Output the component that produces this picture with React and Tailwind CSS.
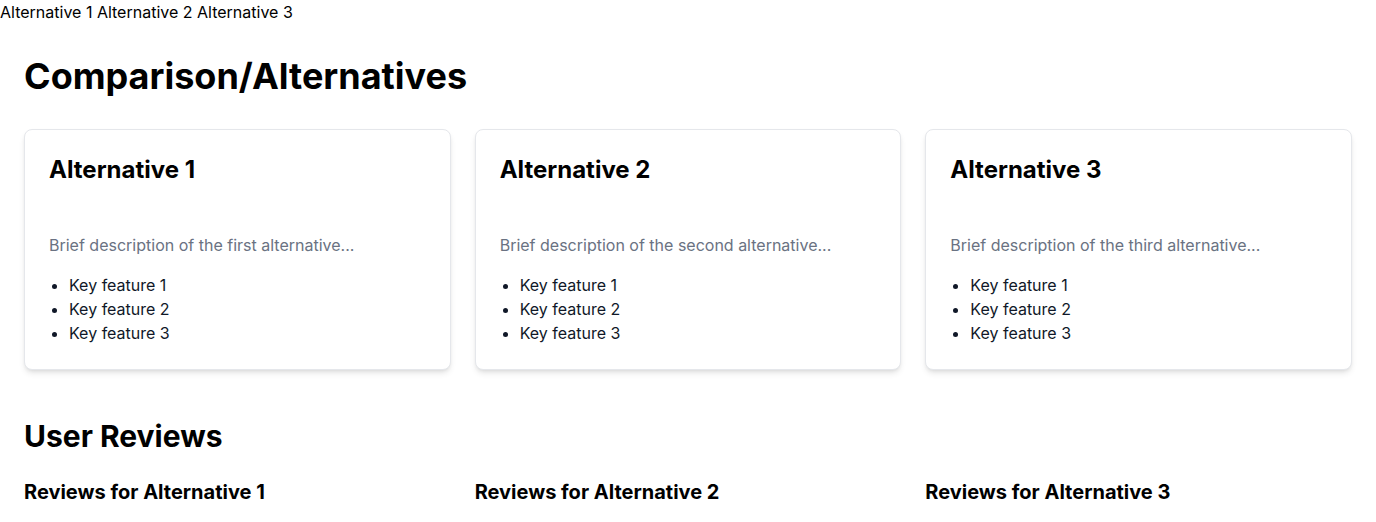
import React from 'react';

const alternatives = [
  { name: 'Alternative 1', desc: 'Brief description of the first alternative...' },
  { name: 'Alternative 2', desc: 'Brief description of the second alternative...' },
  { name: 'Alternative 3', desc: 'Brief description of the third alternative...' },
];

const App = () => {
  return (
    <div className="min-h-screen bg-white text-black font-['Inter',sans-serif]">
      {/* Top nav */}
      <nav className="text-base leading-6">
        {alternatives.map((a, i) => (
          <React.Fragment key={a.name}>
            <a href="#" className="text-black">{a.name}</a>
            {i < alternatives.length - 1 ? ' ' : ''}
          </React.Fragment>
        ))}
      </nav>

      <main className="px-6 pt-8">
        <h2 className="text-4xl font-bold mb-[33px]">Comparison/Alternatives</h2>

        <div className="grid grid-cols-3 gap-6">
          {alternatives.map((a) => (
            <div key={a.name} className="bg-white border border-gray-200 rounded-lg shadow-md p-6">
              <h3 className="text-2xl font-bold mb-[47px]">{a.name}</h3>
              <p className="text-base text-gray-500 mb-4">{a.desc}</p>
              <ul className="list-disc pl-5 text-base text-gray-900">
                <li>Key feature 1</li>
                <li>Key feature 2</li>
                <li>Key feature 3</li>
              </ul>
            </div>
          ))}
        </div>

        <h2 className="text-3xl font-bold mt-12 mb-6">User Reviews</h2>
        <div className="grid grid-cols-3 gap-6">
          {alternatives.map((a) => (
            <div key={a.name}>
              <h3 className="text-xl font-bold">Reviews for {a.name}</h3>
            </div>
          ))}
        </div>
      </main>
    </div>
  );
};

export default App;
